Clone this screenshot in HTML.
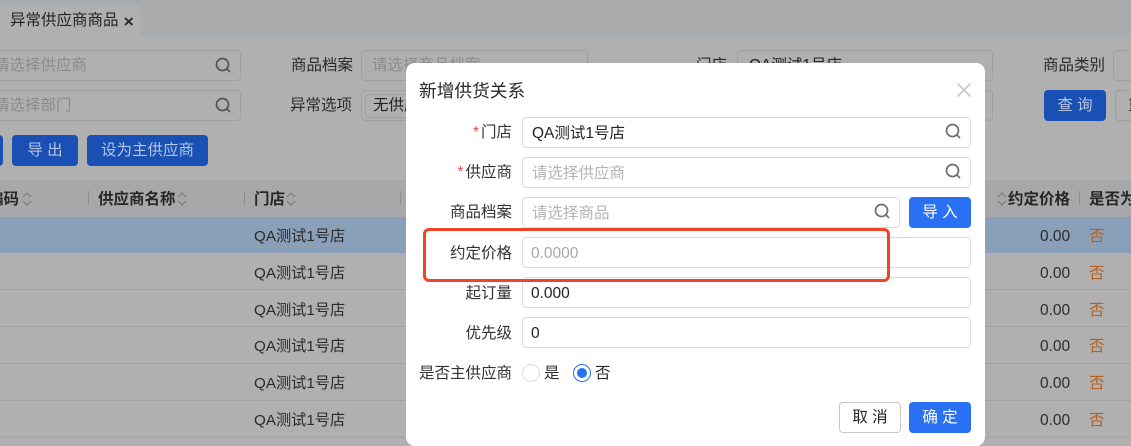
<!DOCTYPE html>
<html lang="zh"><head><meta charset="utf-8"><style>
html,body{margin:0;padding:0;width:1131px;height:446px;overflow:hidden;background:#b0b0b0}
*{box-sizing:border-box}
body{position:relative;font-family:"Liberation Sans","WenQuanYi Zen Hei","Noto Sans CJK SC",sans-serif;font-size:15.5px;color:#2b2b2b}
.a{position:absolute;white-space:nowrap;line-height:20px}
.t{font-size:15.2px}
.bx{position:absolute;border:1px solid #a0a0a0;border-radius:4px;height:31px}
.ph{color:#8b8b8b}
.bb{position:absolute;background:#1a4fb3;color:#b3c5e6;border-radius:4px;text-align:center;height:31px;line-height:32px}
.th{position:absolute;white-space:nowrap;font-weight:bold;color:#262626;line-height:20px;top:190px}
.sep{position:absolute;top:191px;width:1px;height:14px;background:#8f8f8f}
.row{position:absolute;left:0;width:1131px;height:37px;border-bottom:1px solid #a2a2a2}
svg{position:absolute;overflow:visible}
#m{position:absolute;left:406px;top:63px;width:579px;height:383px;background:#fff;border-radius:9px}
.in{position:absolute;left:116px;width:449px;height:31px;border:1px solid #dcdcdc;border-radius:4px;background:#fff;line-height:31px;padding-left:9px;color:#222}
.l{position:absolute;right:473px;white-space:nowrap;line-height:20px;color:#333}
.l i{color:#ef4d4d;font-style:normal;margin-right:2px}
.p{color:#b4b4b4;padding-left:9px}
.n{padding-left:8px}
.btn{position:absolute;height:31px;border-radius:4px;text-align:center;line-height:32px}
</style></head><body>
<div class="a" style="left:0;top:0;width:1131px;height:37px;background:#a9abad"></div>
<div class="a" style="left:0;top:5px;width:141px;height:32px;background:#b0b0b0;border-radius:6px 6px 0 0"></div>
<div class="a" style="left:10px;top:11px;color:#222">异常供应商商品</div>
<svg style="left:124px;top:17px" width="10" height="9" fill="none" stroke="#222" stroke-width="1.8"><path d="M1 1l7.5 7M8.5 1L1 8"/></svg>

<div class="bx" style="left:-10px;top:50px;width:251px"></div>
<div class="a ph" style="left:-6px;top:56px">请选择供应商</div>
<div class="bx" style="left:-10px;top:90px;width:251px"></div>
<div class="a ph" style="left:-6px;top:96px">请选择部门</div>
<svg style="left:215px;top:57px" width="17" height="17" viewBox="0 0 17 17" fill="none" stroke="#555" stroke-width="1.7"><circle cx="7.5" cy="7.5" r="6"/><path d="M12 12l3 3"/></svg>
<svg style="left:215px;top:97px" width="17" height="17" viewBox="0 0 17 17" fill="none" stroke="#555" stroke-width="1.7"><circle cx="7.5" cy="7.5" r="6"/><path d="M12 12l3 3"/></svg>

<div class="a" style="left:291px;top:56px">商品档案</div>
<div class="bx" style="left:361px;top:50px;width:227px"></div>
<div class="a ph" style="left:372px;top:56px">请选择商品档案</div>
<div class="a" style="left:290px;top:96px">异常选项</div>
<div class="bx" style="left:361px;top:90px;width:60px"></div>
<div class="bx" style="left:365px;top:94px;width:60px;height:24px"></div>
<div class="a" style="left:373px;top:96px;color:#222">无供应商</div>
<div class="a" style="left:696px;top:56px">门店</div>
<div class="bx" style="left:737px;top:50px;width:256px"></div>
<div class="a" style="left:749px;top:56px;color:#222">QA测试1号店</div>
<div class="a" style="left:1043px;top:56px">商品类别</div>
<div class="bx" style="left:1113px;top:50px;width:40px"></div>
<div class="bx" style="left:985px;top:90px;width:8px;border-left:0"></div>
<div class="bb" style="left:1044px;top:90px;width:62px">查 询</div>
<div class="bx" style="left:1115px;top:90px;width:40px"></div>
<div class="a" style="left:1128px;top:96px">重</div>

<div class="bb" style="left:-20px;top:135px;width:23px"></div>
<div class="bb" style="left:12px;top:135px;width:66px">导 出</div>
<div class="bb" style="left:87px;top:135px;width:121px">设为主供应商</div>

<div class="a" style="left:0;top:180px;width:1131px;height:38px;background:#a6a8aa"></div>
<div class="th" style="left:-12px">编码</div>
<div class="th" style="left:98px">供应商名称</div>
<div class="th" style="left:254px">门店</div>
<div class="th" style="left:1008px">约定价格</div>
<div class="th" style="left:1089px">是否为主</div>
<div class="sep" style="left:88px"></div><div class="sep" style="left:244px"></div><div class="sep" style="left:400px"></div><div class="sep" style="left:1079px"></div>
<svg style="left:22px;top:191px" width="10" height="16" fill="none" stroke="#7d7d7d" stroke-width="1.2"><path d="M1 6l4-4 4 4M1 10l4 4 4-4"/></svg>
<svg style="left:177px;top:191px" width="10" height="16" fill="none" stroke="#7d7d7d" stroke-width="1.2"><path d="M1 6l4-4 4 4M1 10l4 4 4-4"/></svg>
<svg style="left:286px;top:191px" width="10" height="16" fill="none" stroke="#7d7d7d" stroke-width="1.2"><path d="M1 6l4-4 4 4M1 10l4 4 4-4"/></svg>
<svg style="left:997px;top:191px" width="10" height="16" fill="none" stroke="#7d7d7d" stroke-width="1.2"><path d="M1 6l4-4 4 4M1 10l4 4 4-4"/></svg>

<div class="row" style="top:217px;height:36px;background:#8a9fb8;border:0"></div>
<div class="row" style="top:253px"></div>
<div class="row" style="top:290px"></div>
<div class="row" style="top:327px"></div>
<div class="row" style="top:364px"></div>
<div class="row" style="top:401px"></div>

<div class="a t" style="left:254px;top:227px">QA测试1号店</div>
<div class="a t" style="left:254px;top:264px">QA测试1号店</div>
<div class="a t" style="left:254px;top:301px">QA测试1号店</div>
<div class="a t" style="left:254px;top:337px">QA测试1号店</div>
<div class="a t" style="left:254px;top:374px">QA测试1号店</div>
<div class="a t" style="left:254px;top:411px">QA测试1号店</div>

<div class="a" style="left:1040px;top:227px">0.00</div><div class="a" style="left:1089px;top:227px;color:#b5601f">否</div>
<div class="a" style="left:1040px;top:264px">0.00</div><div class="a" style="left:1089px;top:264px;color:#b5601f">否</div>
<div class="a" style="left:1040px;top:301px">0.00</div><div class="a" style="left:1089px;top:301px;color:#b5601f">否</div>
<div class="a" style="left:1040px;top:337px">0.00</div><div class="a" style="left:1089px;top:337px;color:#b5601f">否</div>
<div class="a" style="left:1040px;top:374px">0.00</div><div class="a" style="left:1089px;top:374px;color:#b5601f">否</div>
<div class="a" style="left:1040px;top:411px">0.00</div><div class="a" style="left:1089px;top:411px;color:#b5601f">否</div>

<div id="m">
<div class="a" style="left:13px;top:18px;color:#2a2a2a;font-size:17.7px">新增供货关系</div>
<svg style="left:550px;top:19px" width="16" height="16" fill="none" stroke="#bdbdbd" stroke-width="1.4"><path d="M1.5 1.5l13 13M14.5 1.5l-13 13"/></svg>

<div class="l" style="top:60px"><i>*</i>门店</div>
<div class="in" style="top:54px">QA测试1号店</div>
<svg style="left:539px;top:60px" width="17" height="17" viewBox="0 0 17 17" fill="none" stroke="#6e6e6e" stroke-width="1.7"><circle cx="7.5" cy="7.5" r="6"/><path d="M12 12l3 3"/></svg>

<div class="l" style="top:100px"><i>*</i>供应商</div>
<div class="in p" style="top:94px">请选择供应商</div>
<svg style="left:539px;top:100px" width="17" height="17" viewBox="0 0 17 17" fill="none" stroke="#6e6e6e" stroke-width="1.7"><circle cx="7.5" cy="7.5" r="6"/><path d="M12 12l3 3"/></svg>

<div class="l" style="top:140px">商品档案</div>
<div class="in p" style="top:134px;width:378px">请选择商品</div>
<svg style="left:468px;top:140px" width="17" height="17" viewBox="0 0 17 17" fill="none" stroke="#6e6e6e" stroke-width="1.7"><circle cx="7.5" cy="7.5" r="6"/><path d="M12 12l3 3"/></svg>
<div class="btn" style="left:503px;top:134px;width:62px;background:#2a70f2;color:#fff">导 入</div>

<div class="l" style="top:181px">约定价格</div>
<div class="in n" style="top:174px;color:#a8a8a8">0.0000</div>

<div class="l" style="top:221px">起订量</div>
<div class="in n" style="top:214px">0.000</div>

<div class="l" style="top:261px">优先级</div>
<div class="in n" style="top:254px">0</div>

<div class="l" style="top:301px">是否主供应商</div>
<div class="a" style="left:116px;top:301px;width:18px;height:18px;border:1px solid #dcdcdc;border-radius:50%"></div>
<div class="a" style="left:138px;top:301px">是</div>
<div class="a" style="left:167px;top:301px;width:18px;height:18px;border:1px solid #2a70f2;border-radius:50%"></div>
<div class="a" style="left:171px;top:305px;width:10px;height:10px;background:#2a70f2;border-radius:50%"></div>
<div class="a" style="left:189px;top:301px">否</div>

<div class="btn" style="left:433px;top:339px;width:62px;border:1px solid #c8c8c8;color:#222;background:#fff;line-height:30px">取 消</div>
<div class="btn" style="left:503px;top:339px;width:62px;background:#2a70f2;color:#fff">确 定</div>
</div>

<div class="a" style="left:423px;top:228px;width:467px;height:54px;border:3px solid #ee4528;border-radius:6px"></div>
</body></html>
